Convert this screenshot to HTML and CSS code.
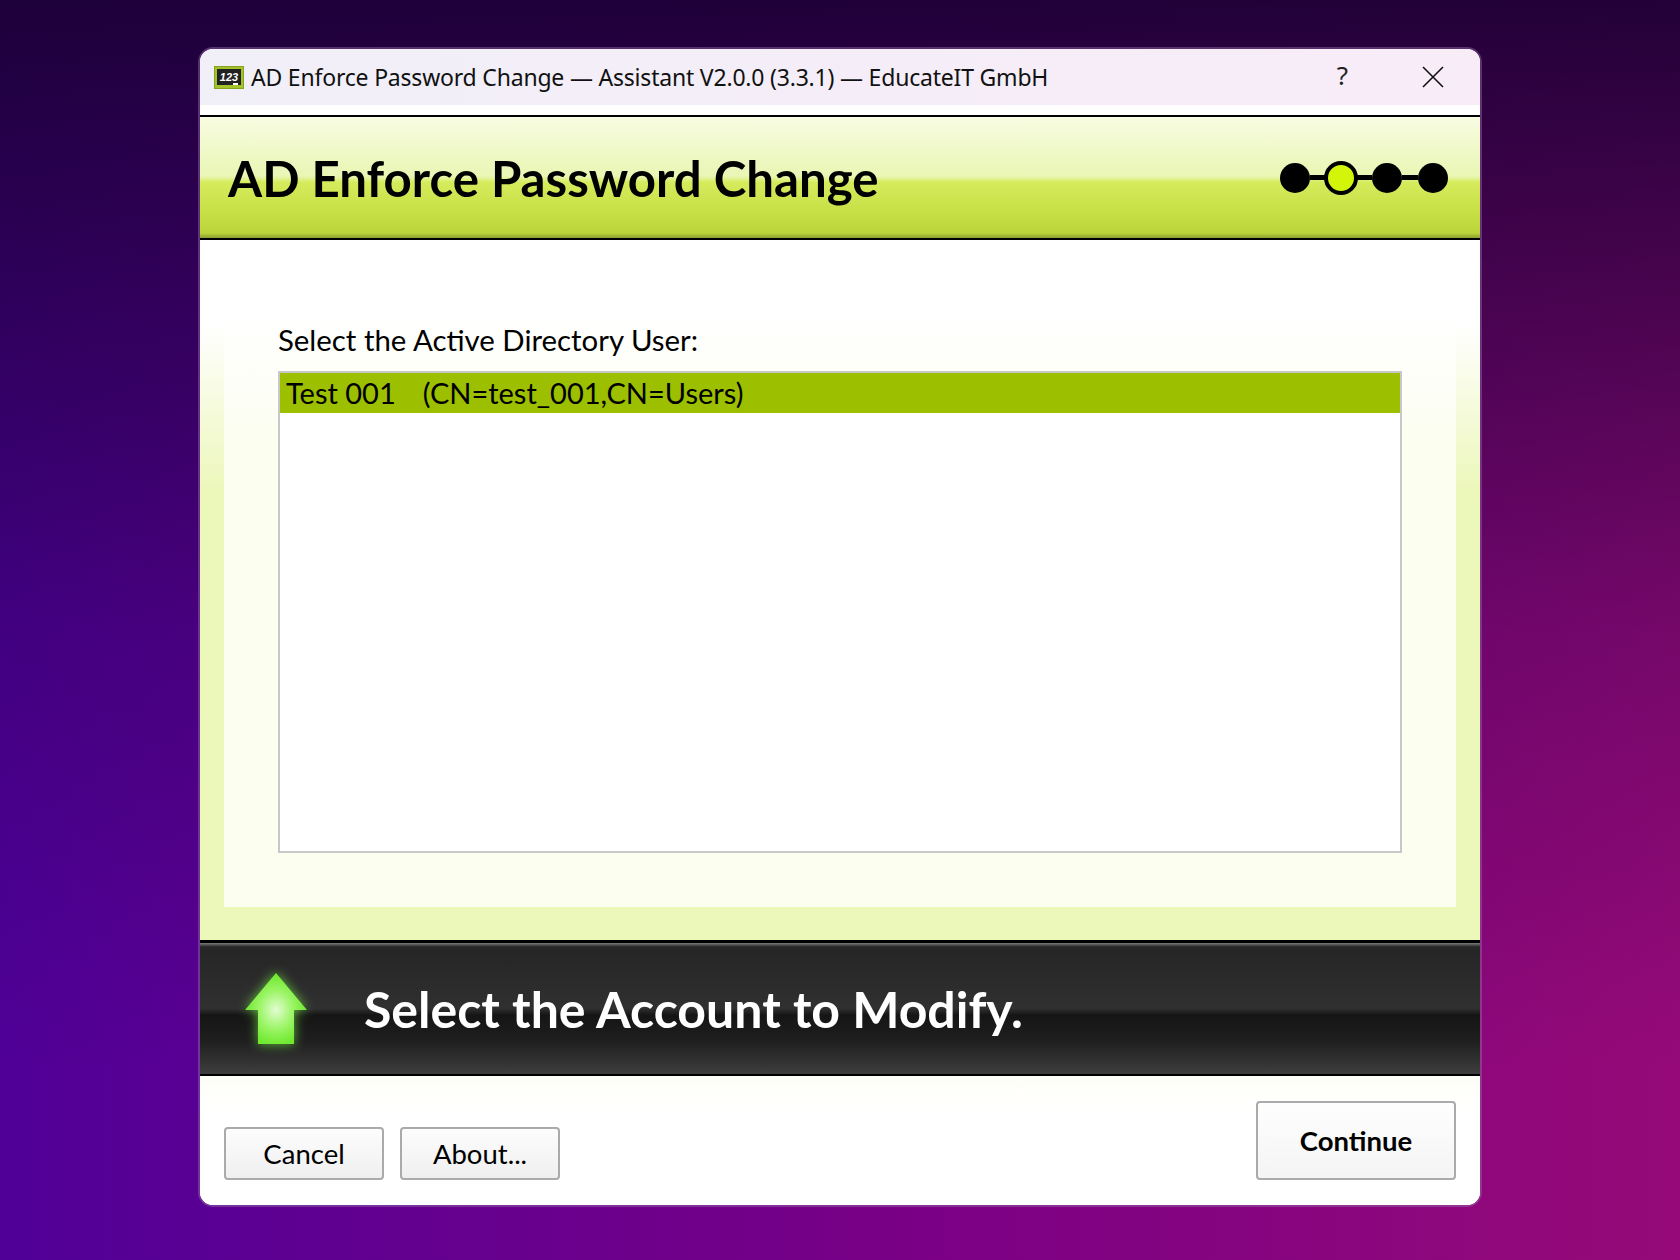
FILE: index.html
```html
<!DOCTYPE html>
<html lang="en">
<head>
    <meta charset="UTF-8">
    <meta name="viewport" content="width=device-width, initial-scale=1.0">
    <title>AD Enforce Password Change</title>
    <link rel="stylesheet" href="styles.css">
</head>
<body>
    <div class="window">
        <div class="titlebar">
            <svg class="appicon" width="30" height="23" viewBox="0 0 30 23">
                <rect x="0.5" y="0.5" width="29" height="22" fill="#a3c22c" stroke="#86a31e"/>
                <rect x="3" y="3" width="24" height="16" fill="#222"/>
                <rect x="19" y="17" width="5" height="2" fill="#fff"/>
                <text x="15" y="14.5" class="chalk">123</text>
            </svg>
            <span class="titletext">AD Enforce Password Change — Assistant V2.0.0 (3.3.1) — EducateIT GmbH</span>
            <span class="helpbtn">?</span>
            <svg class="closebtn" width="22" height="22" viewBox="0 0 22 22">
                <path d="M1 1 L21 21 M21 1 L1 21" stroke="#111" stroke-width="1.6" fill="none"/>
            </svg>
        </div>

        <header class="banner">
            <h1>AD Enforce Password Change</h1>
            <div class="steps">
                <span class="dot"></span>
                <span class="link"></span>
                <span class="dot current"></span>
                <span class="link"></span>
                <span class="dot"></span>
                <span class="link"></span>
                <span class="dot"></span>
            </div>
        </header>

        <main class="content">
            <div class="panel">
                <label class="listlabel">Select the Active Directory User:</label>
                <div class="listbox">
                    <div class="row selected"><span class="cn">Test 001</span>(CN=test_001,CN=Users)</div>
                </div>
            </div>
        </main>

        <div class="hint">
            <svg class="arrow" width="62" height="71" viewBox="0 0 62 71">
                <defs>
                    <radialGradient id="glow" cx="50%" cy="52%" r="50%">
                        <stop offset="0" stop-color="#e2fcd2"/>
                        <stop offset="0.55" stop-color="#9bf565"/>
                        <stop offset="1" stop-color="#6fe82f"/>
                    </radialGradient>
                </defs>
                <polygon points="31,0 62,37 49,37 49,71 13,71 13,37 0,37" fill="url(#glow)"/>
            </svg>
            <p>Select the Account to Modify.</p>
        </div>

        <footer class="actions">
            <button class="btn">Cancel</button>
            <button class="btn">About...</button>
            <button class="btn primary">Continue</button>
        </footer>
    </div>
</body>
</html>
```
FILE: styles.css
```css
html, body {
    height: 100%;
}
body {
    margin: 0;
    height: 1260px;
    box-sizing: border-box;
    padding-top: 49px;
    overflow: hidden;
    font-family: Lato, "Liberation Sans", sans-serif;
    background:
        linear-gradient(180deg, rgba(25, 0, 50, 0.92) 0, rgba(20, 0, 60, 0.25) 50%, rgba(20, 0, 60, 0) 85%),
        linear-gradient(90deg, #500098 0, #7a0085 55%, #960a78 100%);
}

.window {
    width: 1280px;
    height: 1156px;
    margin: 0 auto;
    display: flex;
    flex-direction: column;
    background: #fff;
    border-radius: 13px;
    overflow: hidden;
    box-shadow: 0 0 0 2px rgba(150, 110, 170, 0.45);
}

.titlebar {
    height: 56px;
    margin-bottom: 10px;
    flex: none;
    display: flex;
    align-items: center;
    padding: 0 36px 0 14px;
    background: linear-gradient(90deg, #f1eff8, #f8ecf7);
}
.appicon {
    margin-right: 7px;
}
.chalk {
    font-family: "Liberation Sans", sans-serif;
    font-size: 11px;
    font-weight: bold;
    font-style: italic;
    fill: #fff;
    text-anchor: middle;
}
.titletext {
    flex: 1;
    font-family: "Noto Sans", sans-serif;
    font-size: 23px;
    letter-spacing: -0.2px;
    color: #111;
}
.helpbtn {
    font-family: "Noto Sans", sans-serif;
    font-size: 26px;
    color: #222;
    margin-right: 74px;
    margin-bottom: 4px;
}

.banner {
    height: 125px;
    box-sizing: border-box;
    flex: none;
    display: flex;
    align-items: center;
    justify-content: space-between;
    padding: 0 32px 0 28px;
    border-top: 2px solid #000;
    border-bottom: 2px solid #000;
    background: linear-gradient(180deg, #f8fce2 0, #e9f6b4 49%, #d6eb5c 54%, #c6df44 80%, #bad43a 96%, #8d9f30 100%);
}
.banner h1 {
    margin: 0;
    font-size: 49.2px;
    font-weight: 700;
    color: #000;
}
.steps {
    display: flex;
    align-items: center;
}
.dot {
    width: 30px;
    height: 30px;
    border-radius: 50%;
    background: #000;
}
.dot.current {
    width: 34px;
    height: 34px;
    margin: 0 -2px;
    box-sizing: border-box;
    border: 4px solid #000;
    background: #d2f50a;
    position: relative;
}
.link {
    width: 16px;
    height: 5px;
    background: #000;
}

.content {
    height: 700px;
    flex: none;
    box-sizing: border-box;
    padding: 0 24px 33px;
    background: linear-gradient(180deg, #fff 0, #fff 12%, #ecf7ba 36%, #ecf7ba 100%);
}
.panel {
    height: 100%;
    box-sizing: border-box;
    padding: 75px 54px 54px;
    display: flex;
    flex-direction: column;
    background: linear-gradient(180deg, #fff 0, #fff 11%, #fcfeef 32%, #fcfeef 100%);
}
.listlabel {
    font-size: 29.4px;
    color: #000;
    line-height: 50px;
    margin-bottom: 6px;
}
.listbox {
    flex: 1;
    border: 2px solid #c8c8c8;
    background: #fff;
}
.row {
    font-size: 29px;
    line-height: 40px;
    padding-left: 6px;
    color: #000;
}
.row.selected {
    background: #9cbf00;
}
.cn {
    margin-right: 27px;
}

.hint {
    height: 136px;
    box-sizing: border-box;
    flex: none;
    display: flex;
    align-items: center;
    padding-left: 45px;
    border-top: 3px solid #000;
    border-bottom: 2px solid #000;
    background: linear-gradient(180deg, #7a7a7a 0, #252525 3%, #303030 50%, #151515 55%, #1f1f1f 75%, #3e3e3e 100%);
}
.arrow {
    filter: drop-shadow(0 0 6px rgba(120, 240, 70, 0.75));
    margin-right: 57px;
}
.hint p {
    margin: 0;
    font-size: 50px;
    font-weight: 700;
    color: #fff;
}

.actions {
    flex: 1;
    display: flex;
    align-items: flex-end;
    gap: 16px;
    padding: 0 24px 25px 24px;
    background: linear-gradient(180deg, #fefef8 0, #fff 30%);
}
.btn {
    width: 160px;
    height: 53px;
    font-family: Lato, "Liberation Sans", sans-serif;
    font-size: 27.5px;
    color: #000;
    border: 2px solid #aaa;
    border-radius: 4px;
    background: linear-gradient(180deg, #fdfdfd, #efefef);
}
.btn.primary {
    width: 200px;
    height: 79px;
    margin-left: auto;
    font-weight: 700;
    background: linear-gradient(180deg, #fefefe, #f4f4f4);
}
```
